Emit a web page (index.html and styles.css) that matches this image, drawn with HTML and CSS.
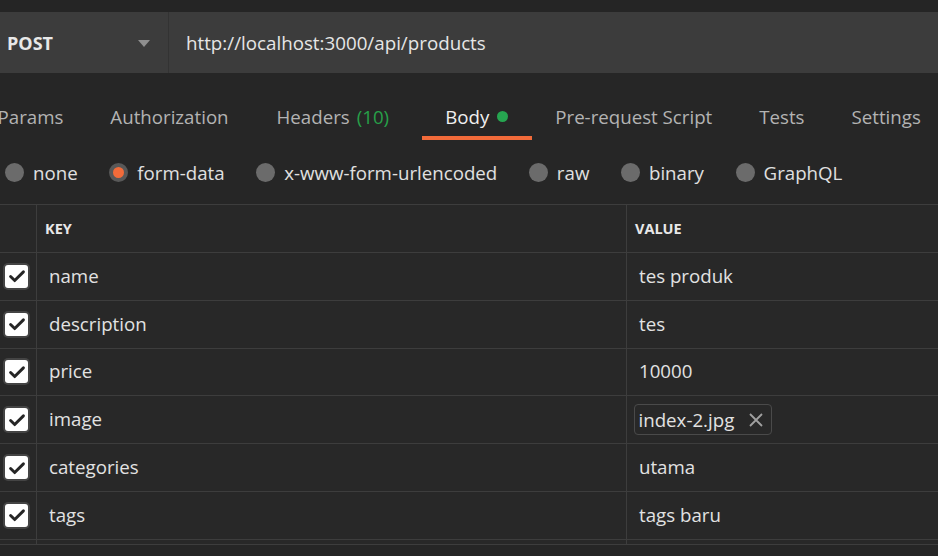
FILE: index.html
```html
<!DOCTYPE html>
<html>
<head>
<meta charset="utf-8">
<link rel="stylesheet" href="styles.css">
</head>
<body>
<div class="page">
  <div class="topband"></div>
  <div class="urlbar">
    <div class="method"><span>POST</span><span class="caret"></span></div>
    <div class="url">http://localhost:3000/api/products</div>
  </div>
  <div class="tabs">
    <div class="tab t-params">Params</div>
    <div class="tab t-auth">Authorization</div>
    <div class="tab">Headers <span class="count">(10)</span></div>
    <div class="tab active">Body <span class="dot"></span></div>
    <div class="tab">Pre-request Script</div>
    <div class="tab">Tests</div>
    <div class="tab">Settings</div>
  </div>
  <div class="radios">
    <div class="radio"><span class="circle"></span>none</div>
    <div class="radio"><span class="circle on"></span>form-data</div>
    <div class="radio"><span class="circle"></span>x-www-form-urlencoded</div>
    <div class="radio"><span class="circle"></span>raw</div>
    <div class="radio"><span class="circle"></span>binary</div>
    <div class="radio"><span class="circle"></span>GraphQL</div>
  </div>
  <div class="table">
    <div class="row head">
      <div class="c-check"></div>
      <div class="c-key">KEY</div>
      <div class="c-val">VALUE</div>
    </div>
    <div class="row">
      <div class="c-check"><span class="cb"><svg viewBox="0 0 24 24"><path d="M5 12.5l4.5 4.5 9.5-9.5"/></svg></span></div>
      <div class="c-key">name</div>
      <div class="c-val">tes produk</div>
    </div>
    <div class="row">
      <div class="c-check"><span class="cb"><svg viewBox="0 0 24 24"><path d="M5 12.5l4.5 4.5 9.5-9.5"/></svg></span></div>
      <div class="c-key">description</div>
      <div class="c-val">tes</div>
    </div>
    <div class="row">
      <div class="c-check"><span class="cb"><svg viewBox="0 0 24 24"><path d="M5 12.5l4.5 4.5 9.5-9.5"/></svg></span></div>
      <div class="c-key">price</div>
      <div class="c-val">10000</div>
    </div>
    <div class="row">
      <div class="c-check"><span class="cb"><svg viewBox="0 0 24 24"><path d="M5 12.5l4.5 4.5 9.5-9.5"/></svg></span></div>
      <div class="c-key">image</div>
      <div class="c-val"><span class="chip">index-2.jpg<svg class="x" viewBox="0 0 16 16"><path d="M2 2l12 12M14 2L2 14"/></svg></span></div>
    </div>
    <div class="row">
      <div class="c-check"><span class="cb"><svg viewBox="0 0 24 24"><path d="M5 12.5l4.5 4.5 9.5-9.5"/></svg></span></div>
      <div class="c-key">categories</div>
      <div class="c-val">utama</div>
    </div>
    <div class="row">
      <div class="c-check"><span class="cb"><svg viewBox="0 0 24 24"><path d="M5 12.5l4.5 4.5 9.5-9.5"/></svg></span></div>
      <div class="c-key">tags</div>
      <div class="c-val">tags baru</div>
    </div>
    <div class="row last">
      <div class="c-check"></div>
      <div class="c-key"></div>
      <div class="c-val"></div>
    </div>
  </div>
</div>
</body>
</html>
```
FILE: styles.css
```css
html, body {
  margin: 0;
  padding: 0;
  background: #262626;
}
body {
  font-family: "Open Sans", "DejaVu Sans", sans-serif;
  color: #e6e6e6;
  width: 938px;
  height: 556px;
  overflow: hidden;
}
.page {
  width: 938px;
}
.topband {
  height: 12px;
  background: #252525;
}
.urlbar {
  height: 61px;
  display: flex;
  background: #3c3c3c;
}
.method {
  width: 169px;
  box-sizing: border-box;
  padding: 0 18px 0 7px;
  display: flex;
  align-items: center;
  justify-content: space-between;
  font-weight: 700;
  font-size: 18px;
  color: #e8e8e8;
  border-right: 1px solid #333333;
}
.caret {
  width: 0;
  height: 0;
  border-left: 6px solid transparent;
  border-right: 6px solid transparent;
  border-top: 7px solid #8f8f8f;
  margin-top: 1px;
}
.url {
  display: flex;
  align-items: center;
  padding-left: 17px;
  font-size: 18.75px;
  color: #e6e6e6;
}
.tabs {
  display: flex;
  height: 67px;
  margin-left: -26px;
}
.tab {
  padding: 23px 23.5px 0;
  display: flex;
  align-items: center;
  font-size: 18.7px;
  color: #b3b3b3;
  box-sizing: border-box;
  border-bottom: 4px solid transparent;
  white-space: nowrap;
}
.tab.t-auth {
  padding-right: 24.5px;
}
.tab.active {
  color: #f0f0f0;
  border-bottom-color: #f26b3a;
  margin-left: 9px;
}
.count {
  color: #27a049;
  margin-left: 7px;
}
.dot {
  display: inline-block;
  width: 11px;
  height: 11px;
  border-radius: 50%;
  background: #26a550;
  margin-left: 8px;
}
.radios {
  display: flex;
  align-items: center;
  height: 64px;
  padding-left: 5px;
  box-sizing: border-box;
  gap: 31.6px;
  font-size: 18.7px;
  color: #e0e0e0;
}
.radio {
  display: flex;
  align-items: center;
}
.circle {
  width: 19px;
  height: 19px;
  border-radius: 50%;
  background: #6b6b6b;
  margin-right: 9px;
  box-sizing: border-box;
}
.circle.on {
  background: #f26b3a;
  border: 4px solid #585858;
}
.table {
  border-top: 1px solid #3d3d3d;
  background: #282828;
}
.row {
  display: grid;
  grid-template-columns: 37px 590px 1fr;
  height: 47.8px;
  border-bottom: 1px solid #3d3d3d;
  box-sizing: border-box;
}
.row > div {
  display: flex;
  align-items: center;
  font-size: 18.7px;
  color: #e2e2e2;
  padding-bottom: 2px;
  box-sizing: border-box;
}
.c-check {
  border-right: 1px solid #3d3d3d;
}
.c-key {
  padding-left: 12px;
  border-right: 1px solid #3d3d3d;
}
.c-val {
  padding-left: 12px;
}
.row.head {
  height: 48px;
}
.row.head > div {
  font-size: 14.5px;
  font-weight: 700;
  color: #e8e8e8;
  padding-bottom: 0;
}
.row.head .c-key {
  padding-left: 8px;
}
.row.head .c-val {
  padding-left: 8px;
}
.row.last {
  height: 5px;
}
.row.last > div {
  padding-bottom: 0;
}
.cb {
  width: 23px;
  height: 23px;
  margin-left: 5px;
  margin-top: 2px;
  background: #ffffff;
  border-radius: 3px;
  box-shadow: 0 0 0 2px #444444;
  display: flex;
  align-items: center;
  justify-content: center;
}
.cb svg {
  width: 22px;
  height: 22px;
  fill: none;
  stroke: #262626;
  stroke-width: 3.2;
  stroke-linecap: round;
  stroke-linejoin: round;
}
.chip {
  display: inline-flex;
  align-items: center;
  height: 31px;
  box-sizing: border-box;
  border: 1.5px solid #4a4a4a;
  border-radius: 4px;
  padding: 0 7px 0 4px;
  margin-left: -5.5px;
  margin-top: 2px;
  color: #e2e2e2;
}
.chip .x {
  width: 16px;
  height: 16px;
  margin-left: 14px;
  fill: none;
  stroke: #a0a0a0;
  stroke-width: 1.8;
}
```
